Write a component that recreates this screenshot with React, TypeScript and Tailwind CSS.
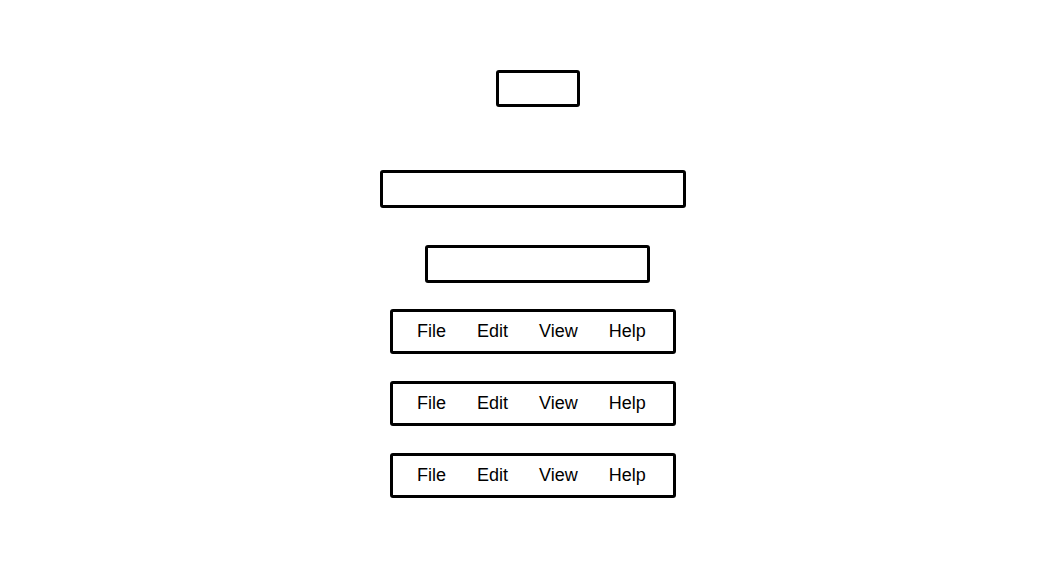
const menuItems = ['File', 'Edit', 'View', 'Help'];

function MenuBar() {
  return (
    <div className="ml-[10px] flex h-[45px] w-[286px] items-center gap-[31px] rounded-[3px] border-[3px] border-black pl-[24px] text-[18px] text-black">
      {menuItems.map((item) => (
        <span key={item}>{item}</span>
      ))}
    </div>
  );
}

export default function App() {
  return (
    <div
      className="min-h-[568px] w-full bg-white pt-[70px] pl-[380px]"
      style={{ fontFamily: '"Liberation Sans", Arial, sans-serif' }}
    >
      <div className="flex flex-col items-start">
        <div className="ml-[116px] h-[37px] w-[84px] rounded-[3px] border-[3px] border-black" />
        <div className="mt-[63px] h-[38px] w-[306px] rounded-[3px] border-[3px] border-black" />
        <div className="mt-[37px] ml-[45px] h-[38px] w-[225px] rounded-[3px] border-[3px] border-black" />
        <div className="mt-[26px] flex flex-col gap-[27px]">
          <MenuBar />
          <MenuBar />
          <MenuBar />
        </div>
      </div>
    </div>
  );
}
